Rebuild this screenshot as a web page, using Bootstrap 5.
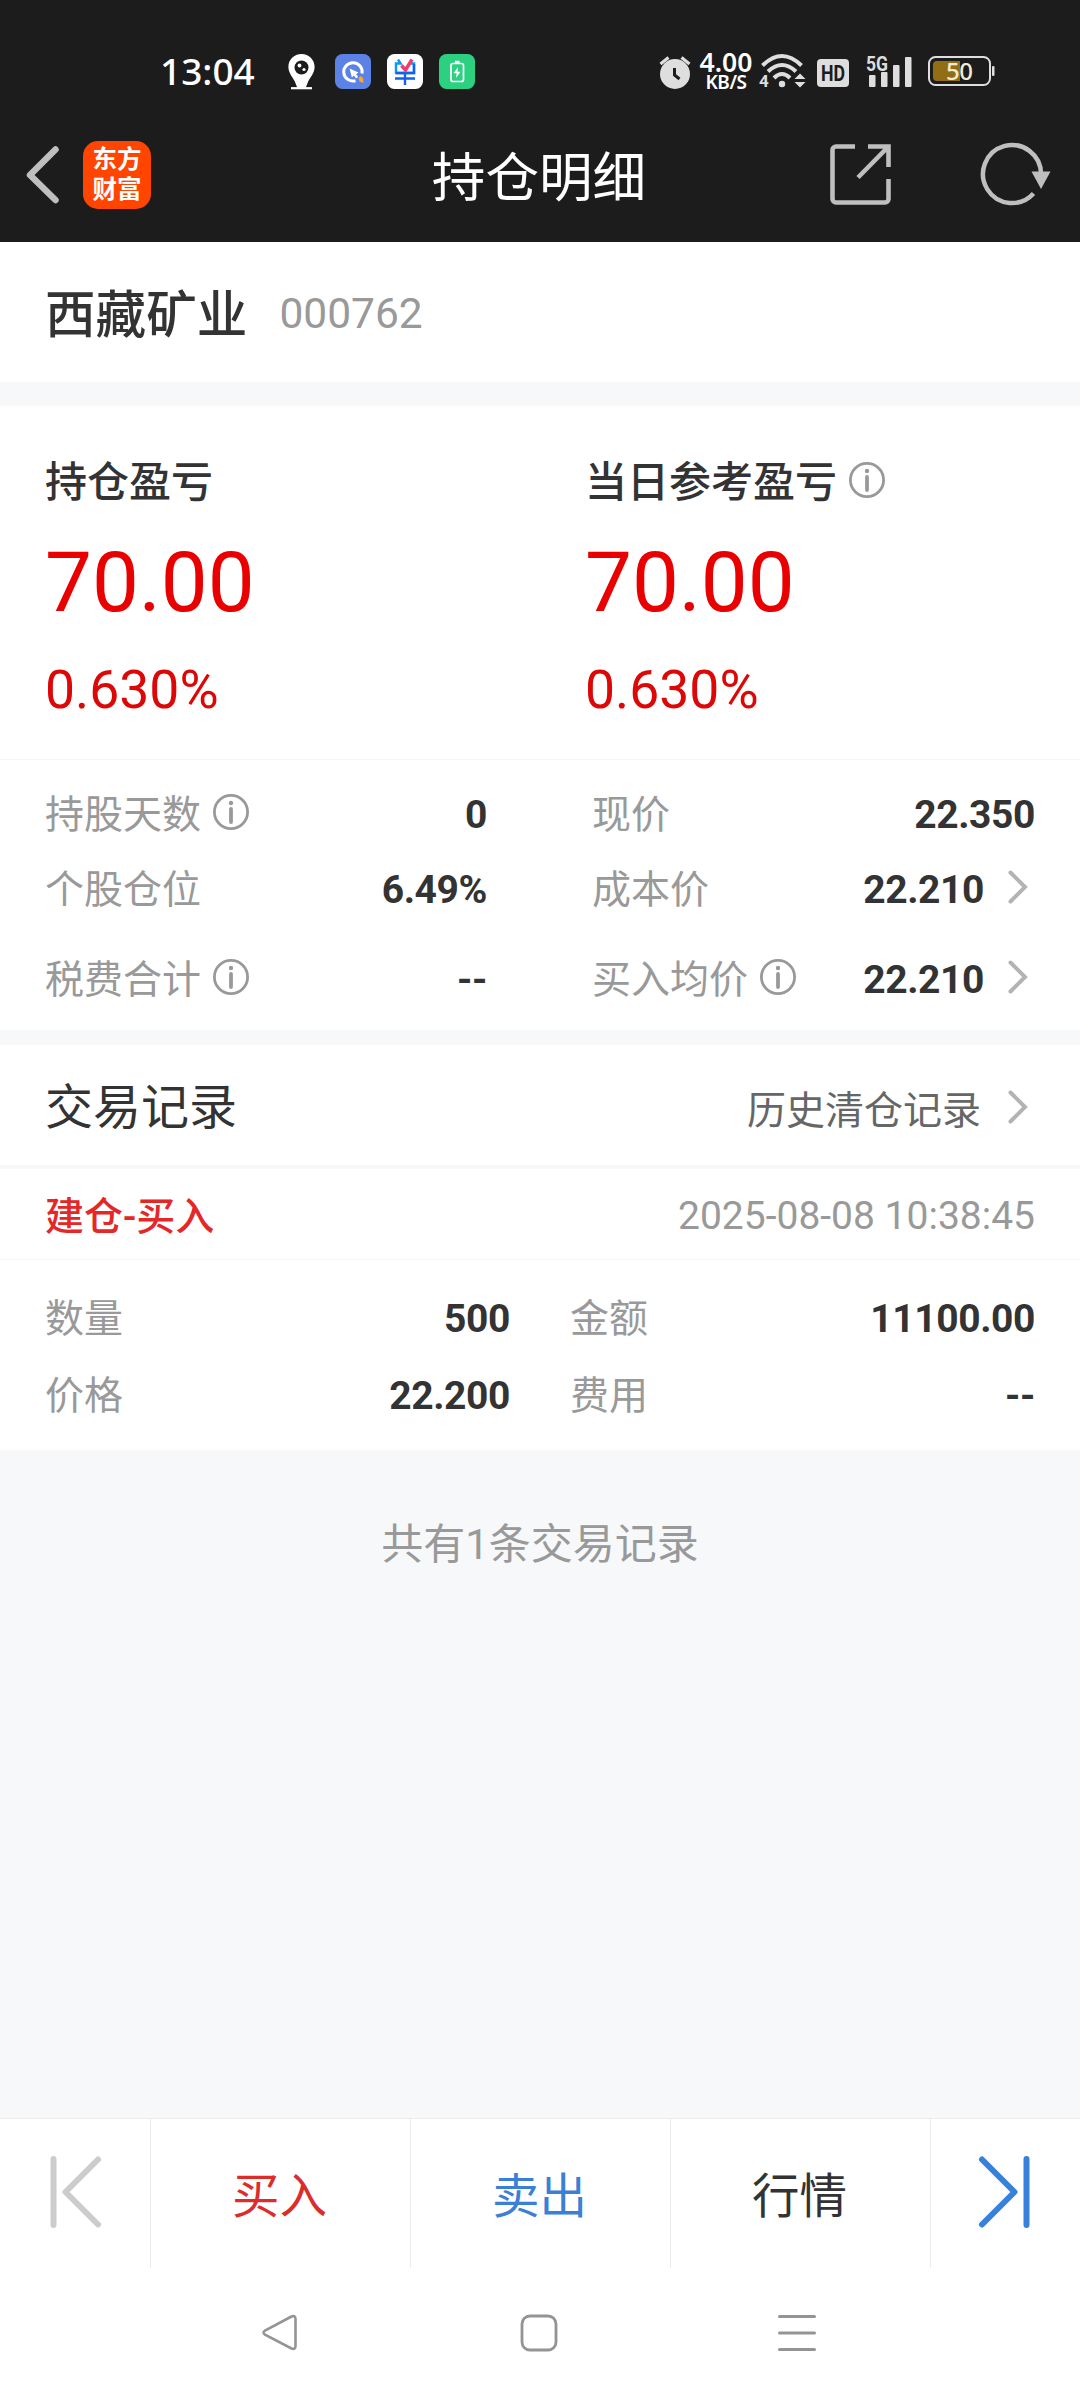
<!DOCTYPE html>
<html lang="zh-CN">
<head>
<meta charset="utf-8">
<meta name="viewport" content="width=device-width, initial-scale=1">
<title>持仓明细</title>
<link href="https://cdn.jsdelivr.net/npm/bootstrap@5.3.0/dist/css/bootstrap.min.css" rel="stylesheet">
<style>
  body { width: 1080px; height: 2400px; font-family: Roboto, "Noto Sans CJK SC", sans-serif; font-size: 39px; line-height: 50px; color: #333; background: #f6f8fa; overflow: hidden; }
  svg { display: block; flex: none; overflow: visible; }
  .topbar { background: #1c1c1c; color: #fff; height: 242px; }
  .statusbar { height: 107px; padding: 53px 0 0 160px; }
  .clock { font: 500 37px/36px "Noto Sans", sans-serif; width: 128px; }
  .speed { font-family: "Noto Sans", sans-serif; font-weight: 600; width: 56px; text-align: center; margin-left: 7px; }
  .speed-num { font-size: 26.5px; line-height: 19px; }
  .speed-unit { font-size: 19px; line-height: 20px; letter-spacing: -.4px; }
  .appbar { height: 135px; }
  .appbar-side { width: 400px; }
  .app-logo { width: 68px; height: 68px; border-radius: 15px; background: #ff4500; font-size: 24.5px; line-height: 29.5px; font-weight: 700; margin-left: 24px; }
  .page-title { font-size: 53.6px; line-height: 60px; padding-top: 9px; margin-left: -2px; }
  .page-x { padding-left: 45px; padding-right: 45px; }
  .stock { height: 140px; padding-top: 7px; }
  .stock-name { font-size: 50.6px; font-weight: 500; }
  .stock-code { font-size: 42.5px; color: #999; margin: -4px 0 0 32px; }
  .profit { margin-top: 24px; height: 353px; padding-top: 52px; }
  .profit-col { width: 450px; }
  .profit-title { font-size: 42px; font-weight: 500; }
  .profit-value { font-size: 83.5px; line-height: 84px; margin-top: 33px; color: #e90000; }
  .profit-rate { font-size: 53.5px; line-height: 54px; margin-top: 38px; color: #dc0808; }
  .hair { border-top: 1px solid #f4f5f6; }
  .stats { height: 271px; padding-top: 17px; }
  .cell { height: 75px; }
  .cell b { font-weight: 700; letter-spacing: -.4px; }
  .cell-gap { margin-top: 15px; }
  .muted { color: #999; }
  .info { margin: -6px 0 0 12px; }
  .more { margin: -5px 7px 0 24px; }
  .stats-left { width: 442px; }
  .stats-right { width: 443px; }
  .records-head { margin-top: 15px; height: 120px; }
  .records-title { font-size: 48px; padding-top: 5px; }
  .records-link { color: #666; padding-top: 11px; margin-right: 1px; }
  .trade-head { height: 94px; border-top: 4px solid #f6f8fa; }
  .trade-type { color: #e42828; font-weight: 500; padding-top: 5px; }
  .trade-time { padding-top: 3px; }
  .trade-body { height: 191px; padding-top: 20px; }
  .trade-body .cell { height: 77px; }
  .trade-left, .trade-right { width: 465px; }
  .trade-right { margin-left: 60px; }
  .summary { font-size: 42px; color: #999; padding-top: 70px; }
  .actions { height: 150px; border-top: 1px solid #ebebeb; font-size: 47.5px; }
  .act-edge { width: 150px; }
  .act-edge svg { margin: -4px 0 0 -1px; }
  .act { border-left: 1px solid #ebebeb; padding: 6px 2px 0 0; }
  .act-last { border-left: 1px solid #ebebeb; }
  .act-buy { color: #dc2c2c; }
  .act-sell { color: #3a80d5; }
  .sysnav { height: 132px; padding: 46px 264px 0 261px; }
</style>
</head>
<body class="d-flex flex-column">
<svg width="0" height="0" class="position-absolute">
  <symbol id="i-info" viewBox="0 0 36 36"><circle cx="18" cy="18" r="16.600" fill="none" stroke="#999" stroke-width="2.800"/><circle cx="18" cy="9" r="2.200" fill="#999"/><path d="M18 15v13" stroke="#999" stroke-width="3.800" stroke-linecap="round"/></symbol>
  <symbol id="i-more" viewBox="0 0 20 34"><path d="M2.500 2.500 17 17 2.500 31.500" fill="none" stroke="#b3b3b3" stroke-width="4" stroke-linecap="round"/></symbol>
</svg>

<header class="topbar flex-shrink-0">
  <div class="statusbar d-flex align-items-start">
    <span class="clock">13:04</span>
    <svg width="27" height="37" viewBox="0 0 27 37"><path d="M13.500 1C6 1 .4 6.600.4 14c0 5 3.500 9.500 6.200 14l2.800 7h8.200l2.800-7c2.700-4.500 6.200-9 6.200-14C26.600 6.600 21 1 13.500 1Z" fill="#fff"/><path d="M3 35.200h21" stroke="#fff" stroke-width="2.200"/><circle cx="13.500" cy="14.500" r="7" fill="#1c1c1c"/><circle cx="11.500" cy="12.500" r="1.900" fill="#fff"/><circle cx="16" cy="16.500" r="1.600" fill="#fff"/></svg>
    <svg width="36" height="37" viewBox="0 0 36 37" style="margin-left:20px"><rect y="1" width="36" height="35" rx="7.500" fill="#5b82e4"/><path d="M20.500 27.700A9.200 9.200 0 1 1 27 20.500" fill="none" stroke="#fff" stroke-width="3"/><path d="m14.500 15.500 9 4-2.400 1.500 2 3-2 1.400-2.200-2.800-2 2z" fill="#fff"/><path d="m23.500 25 2-2 2.500 2 .5 5-4-1.500z" fill="#f5a93b"/></svg>
    <svg width="36" height="37" viewBox="0 0 36 37" style="margin-left:16px"><rect y="1" width="36" height="35" rx="7.500" fill="#fff"/><path d="M11 6.500l2.500 4H9v9.500h18v-9.500h-3" fill="none" stroke="#0a9cf5" stroke-width="2.500"/><path d="M9 20h18V11M18 20v12M8 25.500h20" fill="none" stroke="#1560e8" stroke-width="2.400"/><path d="m14.500 12.500 4 4.500L25 6.500" fill="none" stroke="#ef3e6d" stroke-width="3.500"/></svg>
    <svg width="36" height="37" viewBox="0 0 36 37" style="margin-left:16px"><rect y="1" width="36" height="35" rx="7.500" fill="#2bd080"/><rect x="12" y="10.500" width="12.500" height="18" rx="2" fill="none" stroke="#fff" stroke-width="1.700"/><path d="M16 9h4.500" stroke="#fff" stroke-width="2.500"/><path d="m19 14-4.500 6.300h3.200L17 25l4.500-6.300h-3z" fill="#fff"/></svg>
    <svg width="32" height="38" viewBox="0 0 32 38" style="margin-left:184px"><circle cx="16" cy="21" r="15" fill="#dedede"/><path d="M1.500 11 9.500 4.500M30.500 11l-8-6.500" stroke="#dedede" stroke-width="3.200"/><path d="M15.500 15v7l5 4" fill="none" stroke="#1c1c1c" stroke-width="3"/></svg>
    <div class="speed d-flex flex-column"><span class="speed-num">4.00</span><span class="speed-unit">KB/S</span></div>
    <svg width="48" height="37" viewBox="0 0 48 37" style="margin-left:5px"><g fill="none" stroke="#dedede" stroke-width="4"><path d="M3.500 12.500Q23-6.500 42.500 12.500"/><path d="M9 18.500Q23 5.500 37 18.500"/><path d="M15 25Q23 17 31 25"/></g><circle cx="23" cy="31" r="3.200" fill="#dedede"/><text x="0" y="34" font-family="Roboto" font-weight="700" font-size="17" fill="#dedede">4</text><path d="M35.500 26h11L41 20.500zM35.500 29h11L41 34.500z" fill="#dedede"/></svg>
    <svg width="32" height="37" viewBox="0 0 32 37" style="margin-left:10px"><rect y="6" width="32" height="28" rx="4" fill="#dedede"/><text x="16" y="28" text-anchor="middle" textLength="24" lengthAdjust="spacingAndGlyphs" font-family="Roboto" font-weight="700" font-size="22.500" fill="#1c1c1c">HD</text></svg>
    <svg width="47" height="37" viewBox="0 0 47 37" style="margin-left:17px"><text x="0" y="18" textLength="22" lengthAdjust="spacingAndGlyphs" font-family="Roboto" font-weight="700" font-size="20.500" fill="#dedede">5G</text><g fill="#dedede"><rect x="3" y="22" width="6.500" height="12" rx="1"/><rect x="15" y="19" width="6.500" height="15" rx="1"/><rect x="27" y="12" width="6.500" height="22" rx="1"/><rect x="39" y="4" width="6.500" height="30" rx="1"/></g></svg>
    <svg width="68" height="37" viewBox="0 0 68 37" style="margin-left:15px"><rect x="1" y="4" width="61" height="28" rx="6.500" fill="none" stroke="#dedede" stroke-width="2"/><path d="M32 8v20H9a4 4 0 0 1-4-4V12a4 4 0 0 1 4-4z" fill="#916e15"/><rect x="64" y="13" width="2.500" height="10" rx="1" fill="#dedede"/><text x="31.500" y="27" text-anchor="middle" textLength="27" font-family="Noto Sans" font-weight="500" font-size="24" fill="#f3ecd2">50</text></svg>
  </div>
  <nav class="appbar d-flex align-items-center">
    <div class="appbar-side d-flex align-items-center">
      <svg width="33" height="58" viewBox="0 0 33 58" style="margin-left:26px"><path d="M29.500 3.500 4 29l25.500 25" fill="none" stroke="#bfbfbf" stroke-width="6.500" stroke-linecap="round" stroke-linejoin="round"/></svg>
      <div class="app-logo d-flex flex-column align-items-center justify-content-center"><span>东方</span><span>财富</span></div>
    </div>
    <div class="page-title flex-grow-1 text-center">持仓明细</div>
    <div class="appbar-side d-flex align-items-center">
      <svg width="62" height="62" viewBox="0 0 62 62" style="margin-left:150px"><path d="M25 2.500H6A3.500 3.500 0 0 0 2.500 6v49A3.500 3.500 0 0 0 6 58.500h49a3.500 3.500 0 0 0 3.500-3.500V35M38 2.500h20.500V23M57.500 3.500 28 33.500" fill="none" stroke="#bfbfbf" stroke-width="4.600"/></svg>
      <svg width="72" height="66" viewBox="0 0 72 66" style="margin-left:87px"><path d="M62 32A29 29 0 1 0 54.500 51.500" fill="none" stroke="#bfbfbf" stroke-width="4.500"/><path d="M52.500 29.500h19L62 47z" fill="#bfbfbf"/></svg>
    </div>
  </nav>
</header>

<main class="flex-grow-1">
  <section class="stock page-x bg-white d-flex align-items-center">
    <span class="stock-name">西藏矿业</span><span class="stock-code">000762</span>
  </section>

  <section class="profit page-x bg-white d-flex justify-content-between">
    <div class="profit-col">
      <div class="profit-title">持仓盈亏</div>
      <div class="profit-value">70.00</div>
      <div class="profit-rate">0.630%</div>
    </div>
    <div class="profit-col">
      <div class="profit-title d-flex align-items-center">当日参考盈亏<svg class="info" width="36" height="36"><use href="#i-info"/></svg></div>
      <div class="profit-value">70.00</div>
      <div class="profit-rate">0.630%</div>
    </div>
  </section>

  <section class="stats hair page-x bg-white d-flex justify-content-between">
    <div class="stats-left">
      <div class="cell d-flex align-items-center"><span class="muted">持股天数</span><svg class="info" width="36" height="36"><use href="#i-info"/></svg><b class="ms-auto">0</b></div>
      <div class="cell d-flex align-items-center"><span class="muted">个股仓位</span><b class="ms-auto">6.49%</b></div>
      <div class="cell cell-gap d-flex align-items-center"><span class="muted">税费合计</span><svg class="info" width="36" height="36"><use href="#i-info"/></svg><b class="ms-auto">--</b></div>
    </div>
    <div class="stats-right">
      <div class="cell d-flex align-items-center"><span class="muted">现价</span><b class="ms-auto">22.350</b></div>
      <div class="cell d-flex align-items-center"><span class="muted">成本价</span><b class="ms-auto">22.210</b><svg class="more" width="20" height="34"><use href="#i-more"/></svg></div>
      <div class="cell cell-gap d-flex align-items-center"><span class="muted">买入均价</span><svg class="info" width="36" height="36"><use href="#i-info"/></svg><b class="ms-auto">22.210</b><svg class="more" width="20" height="34"><use href="#i-more"/></svg></div>
    </div>
  </section>

  <section class="records-head page-x bg-white d-flex align-items-center">
    <span class="records-title">交易记录</span>
    <span class="records-link ms-auto">历史清仓记录</span>
    <svg class="more" width="20" height="34" style="margin:4px 7px 0 26px"><use href="#i-more"/></svg>
  </section>
  <section class="bg-white">
    <div class="trade-head page-x d-flex align-items-center justify-content-between">
      <span class="trade-type">建仓-买入</span><span class="trade-time muted">2025-08-08 10:38:45</span>
    </div>
    <div class="trade-body hair page-x d-flex justify-content-between">
      <div class="trade-left">
        <div class="cell d-flex align-items-center justify-content-between"><span class="muted">数量</span><b>500</b></div>
        <div class="cell d-flex align-items-center justify-content-between"><span class="muted">价格</span><b>22.200</b></div>
      </div>
      <div class="trade-right">
        <div class="cell d-flex align-items-center justify-content-between"><span class="muted">金额</span><b>11100.00</b></div>
        <div class="cell d-flex align-items-center justify-content-between"><span class="muted">费用</span><b>--</b></div>
      </div>
    </div>
  </section>
  <p class="summary text-center mb-0">共有1条交易记录</p>
</main>

<footer class="bg-white flex-shrink-0">
  <div class="actions d-flex text-center">
    <div class="act-edge d-flex align-items-center justify-content-center"><svg width="52" height="74" viewBox="0 0 52 74"><path d="M4.500 4v66M49 4.500 16.500 37 49 69.500" fill="none" stroke="#ccc" stroke-width="6" stroke-linecap="round" stroke-linejoin="round"/></svg></div>
    <div class="act act-buy flex-fill d-flex align-items-center justify-content-center">买入</div>
    <div class="act act-sell flex-fill d-flex align-items-center justify-content-center">卖出</div>
    <div class="act flex-fill d-flex align-items-center justify-content-center">行情</div>
    <div class="act-edge act-last d-flex align-items-center justify-content-center"><svg width="52" height="74" viewBox="0 0 52 74"><path d="M47.500 4v66M3 4.500 35.500 37 3 69.500" fill="none" stroke="#3780dc" stroke-width="6" stroke-linecap="round" stroke-linejoin="round"/></svg></div>
  </div>
  <div class="sysnav d-flex justify-content-between align-items-start">
    <svg width="38" height="38" viewBox="0 0 38 38"><path d="M30.500 2.500 4 16.500q-3 2 0 4.200L30.500 34.500q4 1.500 4-2.500V5q0-4-4-2.500Z" fill="none" stroke="#949494" stroke-width="2.600"/></svg>
    <svg width="38" height="38" viewBox="0 0 38 38"><rect x="2" y="2" width="34" height="34" rx="8" fill="none" stroke="#949494" stroke-width="2.800"/></svg>
    <svg width="38" height="38" viewBox="0 0 38 38"><path d="M1.500 2.500h35M1.500 19h35M1.500 35.500h35" stroke="#949494" stroke-width="3" stroke-linecap="round"/></svg>
  </div>
</footer>
<script src="https://cdn.jsdelivr.net/npm/bootstrap@5.3.0/dist/js/bootstrap.bundle.min.js"></script>
</body>
</html>
